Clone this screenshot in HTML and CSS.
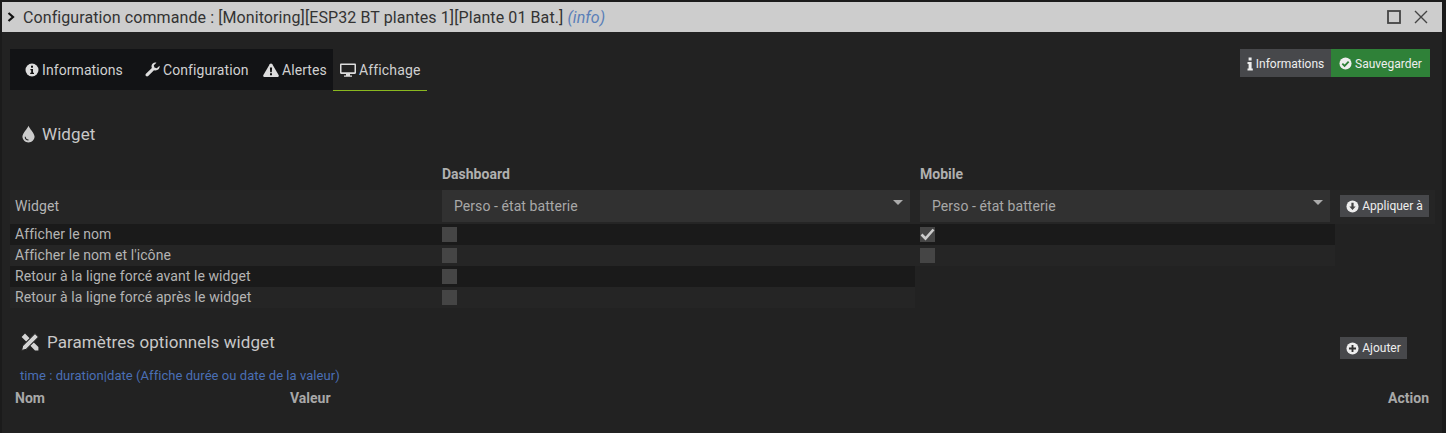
FILE: index.html
```html
<!DOCTYPE html>
<html lang="fr">
<head>
<meta charset="utf-8">
<title>Configuration commande</title>
<link rel="stylesheet" href="styles.css">
</head>
<body>
<div class="dialog">
  <header class="titlebar">
    <svg class="chev" viewBox="0 0 8 10" width="8" height="10"><path d="M1.5 1 L6 5 L1.5 9" fill="none" stroke="#111" stroke-width="2.2"/></svg>
    <span class="title">Configuration commande : [Monitoring][ESP32 BT plantes 1][Plante 01 Bat.] <em class="info">(info)</em></span>
    <span class="winbtns">
      <svg viewBox="0 0 14 14" width="14" height="14"><rect x="1" y="1" width="12" height="12" fill="none" stroke="#444" stroke-width="1.8"/></svg>
      <svg viewBox="0 0 14 14" width="14" height="14"><path d="M1 1 L13 13 M13 1 L1 13" fill="none" stroke="#444" stroke-width="1.4"/></svg>
    </span>
  </header>
  <main class="content">
    <div class="topbar">
      <nav class="tabs">
        <a class="tab t1"><svg class="ic" viewBox="0 0 14 14" width="14" height="14"><circle cx="7" cy="7" r="6.5" fill="#ddd"/><rect x="6" y="2.7" width="2" height="2" fill="#111"/><path d="M5.4 6 H8 V9.8 H9 V11 H5.2 V9.8 H6.2 V7.2 H5.4 Z" fill="#111"/></svg>Informations</a>
        <a class="tab t2"><svg class="ic ic-wrench" viewBox="0 0 14 14" width="15" height="15"><path d="M13.6 3.4 L11 5.8 L8.8 5.2 L8.2 3 L10.7 .6 C8.6 -.1 6.4 1.2 6.1 3.4 C6 4.2 6.1 4.8 6.4 5.5 L.9 11 C.2 11.8 .4 12.6 .9 13 C1.5 13.6 2.3 13.6 3 13 L8.4 7.6 C9.2 7.9 9.9 8 10.7 7.8 C12.8 7.3 14 5.4 13.6 3.4 Z" fill="#ddd"/></svg>Configuration</a>
        <a class="tab t3"><svg class="ic" viewBox="0 0 16 14" width="16" height="14"><path d="M8 .5 C8.6 .5 9 .8 9.3 1.3 L15.6 12 C16.1 13 15.5 14 14.4 14 H1.6 C.5 14 -.1 13 .4 12 L6.7 1.3 C7 .8 7.4 .5 8 .5 Z" fill="#ddd"/><path d="M6.9 4.5 H9.1 L8.8 9.2 H7.2 Z M7 10.2 H9 V12.2 H7 Z" fill="#111"/></svg>Alertes</a>
        <a class="tab active"><svg class="ic" viewBox="0 0 16 14" width="16" height="14"><path d="M1.2 .5 H14.8 C15.5 .5 16 1 16 1.7 V9.8 C16 10.5 15.5 11 14.8 11 H10 V12.4 H12 V13.8 H4 V12.4 H6 V11 H1.2 C.5 11 0 10.5 0 9.8 V1.7 C0 1 .5 .5 1.2 .5 Z M1.5 2 V9.2 H14.5 V2 Z" fill="#ddd" fill-rule="evenodd"/></svg>Affichage</a>
      </nav>
      <div class="actions">
        <a class="btn btn-info"><svg class="ic-s" viewBox="0 0 6 14" width="6" height="14"><rect x="1.6" y="0.5" width="3" height="3" fill="#eee"/><path d="M.5 5 H4.6 V11.6 H5.8 V13.6 H.5 V11.6 H1.6 V7 H.5 Z" fill="#eee"/></svg>Informations</a>
        <a class="btn btn-save"><svg class="ic-s" viewBox="0 0 14 14" width="13" height="13"><circle cx="7" cy="7" r="6.5" fill="#eee"/><path d="M3.6 7.2 L6 9.6 L10.4 5" fill="none" stroke="#2f8138" stroke-width="2"/></svg>Sauvegarder</a>
      </div>
    </div>

    <h3 class="section widget-head"><svg class="ic-h" viewBox="0 0 12 16" width="13" height="18"><path d="M6 .3 C7 3 11.6 7.4 11.6 10.4 C11.6 13.5 9 15.8 6 15.8 C3 15.8 .4 13.5 .4 10.4 C.4 7.4 5 3 6 .3 Z" fill="#ccc"/><path d="M3 10.5 C3 12.2 4.2 13.5 6 13.6" fill="none" stroke="#222" stroke-width="1"/></svg>Widget</h3>

    <div class="cols-head"><span class="col-a">Dashboard</span><span>Mobile</span></div>
    <div class="row-widget">
      <span class="lbl lbl-a lbl-up">Widget</span>
      <div class="select sel-a">Perso - état batterie<i class="caret"></i></div>
      <div class="select sel-b">Perso - état batterie<i class="caret"></i></div>
      <a class="btn btn-grey btn-apply"><svg class="ic-s" viewBox="0 0 14 14" width="13" height="13"><circle cx="7" cy="7" r="6.5" fill="#eee"/><path d="M5.8 3 H8.2 V7 H10.4 L7 10.8 L3.6 7 H5.8 Z" fill="#444"/></svg>Appliquer à</a>
    </div>
    <div class="row dark wide"><span class="lbl lbl-a">Afficher le nom</span><span class="cb cb-a"></span><span class="cb checked"><svg viewBox="0 0 15 15" width="15" height="15"><path d="M1.5 7.5 L5.5 11.5 L13.5 2.5" fill="none" stroke="#ccc" stroke-width="2.6"/></svg></span></div>
    <div class="row light wide"><span class="lbl lbl-a">Afficher le nom et l'icône</span><span class="cb cb-a"></span><span class="cb"></span></div>
    <div class="row dark"><span class="lbl lbl-a">Retour à la ligne forcé avant le widget</span><span class="cb cb-a"></span></div>
    <div class="row light"><span class="lbl lbl-a">Retour à la ligne forcé après le widget</span><span class="cb cb-a"></span></div>

    <div class="params-head">
      <h3 class="section"><svg class="ic-h ic-tools" viewBox="0 0 18 18" width="18" height="18"><path d="M4 .6 L8.6 5.2 L5.2 8.6 L.6 4 Z M9.4 12.8 L12.8 9.4 L17.4 14 L17.4 17.4 L14 17.4 Z" fill="#d4d4d4"/><path d="M14 .6 L17.4 4 L5 16.4 L.6 17.4 L1.6 13 Z" fill="#d4d4d4" stroke="#222" stroke-width="1"/></svg>Paramètres optionnels widget</h3>
      <a class="btn btn-grey btn-add"><svg class="ic-s" viewBox="0 0 14 14" width="13" height="13"><circle cx="7" cy="7" r="6.5" fill="#eee"/><path d="M7 3.2 V10.8 M3.2 7 H10.8" stroke="#333" stroke-width="2"/></svg>Ajouter</a>
    </div>
    <div class="hint">time : duration|date (Affiche durée ou date de la valeur)</div>
    <div class="thead"><span class="th-nom">Nom</span><span class="th-val">Valeur</span><span class="th-act">Action</span></div>
  </main>
</div>
</body>
</html>
```
FILE: styles.css
```css
* { box-sizing: border-box; }
html, body { margin: 0; padding: 0; height: 100%; overflow: hidden; }
body { background: #1b1b1b; font-family: Roboto, "Liberation Sans", sans-serif; color: #b8b8b8; font-size: 14px; padding: 2px 4px 0 2px; }
.dialog { width: 1440px; height: 431px; background: #222; display: flex; flex-direction: column; }
.titlebar { height: 30px; background: #cdcdcd; display: flex; align-items: center; padding: 0 14px 0 5px; color: #333; flex: none; }
.chev { margin-right: 8px; }
.title { font-size: 16px; letter-spacing: .09px; flex: 1; white-space: nowrap; }
.info { color: #5a7fb8; }
.winbtns { display: flex; gap: 13px; align-items: center; }
.content { flex: 1; display: flex; flex-direction: column; padding: 17px 12px 0 8px; }
.topbar { display: flex; justify-content: space-between; align-items: flex-start; height: 42px; }
.tabs { display: flex; background: #121315; height: 41px; width: 323px; }
.tab { display: flex; align-items: center; flex: none; height: 41px; color: #d0d0d0; font-size: 14px; letter-spacing: .08px; white-space: nowrap; }
.ic { margin-right: 3px; flex: none; }
.ic-wrench { margin-right: 3px; }
.t1 { padding-left: 15px; width: 120px; }
.t2 { padding-left: 15px; width: 117px; }
.t3 { padding-left: 16px; width: 86px; }
.tab.active { background: #222; padding-left: 7px; width: 94px; height: 42px; border-bottom: 1px solid #8ab81f; letter-spacing: .15px; }
.actions { display: flex; }
.btn { display: inline-flex; align-items: center; justify-content: center; color: #eee; font-size: 12px; white-space: nowrap; }
.ic-s { margin-right: 3px; flex: none; }
.btn-info { background: #47484b; width: 91px; height: 28px; padding-top: 1px; }
.btn-save { background: #2f8138; width: 99px; height: 28px; padding-top: 1px; }
.section { margin: 0; font-size: 17px; font-weight: 400; letter-spacing: .07px; color: #c8c8c8; display: flex; align-items: center; }
.widget-head { padding: 0 0 0 12px; height: 24px; margin-top: 31px; }
.ic-h { margin-right: 7px; flex: none; }
.ic-tools { margin-right: 8px; }
.cols-head { display: flex; margin-top: 21px; height: 15px; line-height: 15px; font-weight: 700; color: #b0b0b0; font-size: 14px; padding-left: 432px; }
.col-a { width: 478px; }
.row-widget { display: flex; align-items: flex-start; height: 34px; margin-top: 8px; background: #252525; width: 1425px; }
.lbl { color: #b4b4b4; font-size: 14px; letter-spacing: .08px; padding-left: 5px; padding-bottom: 2px; white-space: nowrap; }
.lbl-a { width: 432px; flex: none; }
.lbl-up { line-height: 32px; padding-bottom: 0; }
.select { height: 32px; background: #313131; color: #a8a8a8; display: flex; align-items: center; padding-left: 12px; font-size: 14px; letter-spacing: .07px; position: relative; flex: none; }
.sel-a { width: 468px; margin-right: 10px; }
.sel-b { width: 410px; margin-right: 10px; }
.caret { position: absolute; right: 7px; top: 10px; width: 0; height: 0; border-left: 5px solid transparent; border-right: 5px solid transparent; border-top: 5px solid #aaa; }
.btn-grey { background: #47484b; flex: none; }
.btn-apply { width: 89px; height: 22px; margin-top: 5px; }
.row { display: flex; align-items: center; height: 21px; width: 905px; }
.row.wide { width: 1325px; }
.dark { background: #1a1a1a; }
.light { background: #252525; }
.cb { width: 15px; height: 15px; background: #454545; display: block; flex: none; }
.cb-a { margin-right: 463px; }
.checked svg { display: block; }
.params-head { display: flex; justify-content: space-between; align-items: flex-start; height: 30px; margin-top: 19px; padding: 5px 23px 0 11px; }
.btn-add { width: 67px; height: 22px; margin-top: 5px; }
.hint { color: #4a6fb5; font-size: 13px; letter-spacing: .05px; padding-left: 10px; margin-top: 12px; height: 14px; line-height: 14px; }
.thead { display: flex; font-weight: 700; color: #a8a8a8; font-size: 14px; margin-top: 7px; padding-left: 5px; padding-right: 1px; }
.th-nom { width: 275px; }
.th-val { flex: 1; }
```
